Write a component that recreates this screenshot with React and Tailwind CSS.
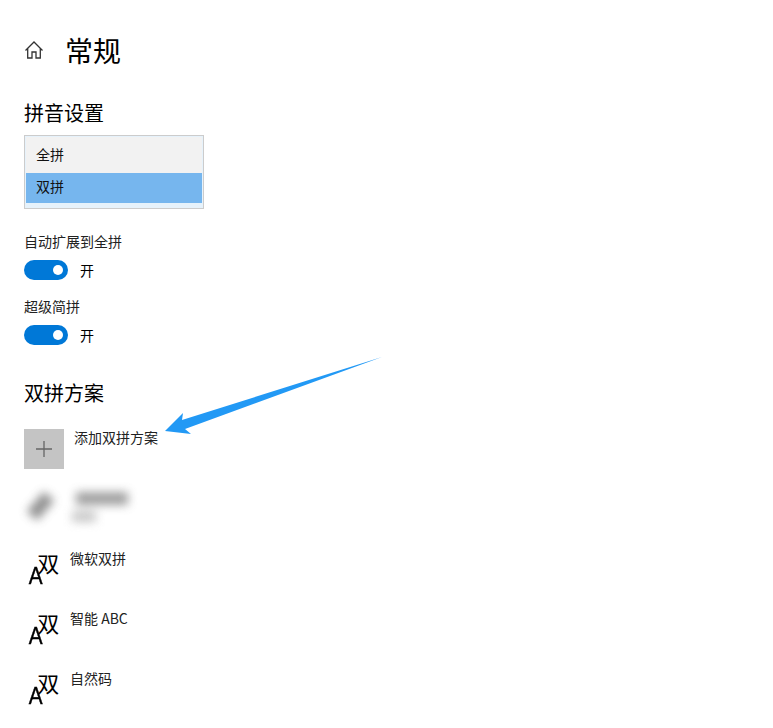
const FONT = "font-['Noto_Sans_CJK_SC','Noto_Sans',sans-serif]";

function Toggle() {
  return (
    <div className="flex items-center h-5 gap-3">
      <div className="w-11 h-5 rounded-full bg-[#0078d7] flex items-center justify-end pr-[5px]">
        <div className="w-[10px] h-[10px] rounded-full bg-white" />
      </div>
      <span className="text-sm leading-5 text-black">开</span>
    </div>
  );
}

function SchemeIcon() {
  return (
    <div className="w-10 h-10 shrink-0 text-black pl-[4px] pt-[3px] flex items-start">
      <span className="text-[23px] leading-none mt-[13px] scale-x-90 [-webkit-text-stroke:0.4px_black] font-['Liberation_Sans',sans-serif]">A</span>
      <span className="text-[22px] leading-none -ml-[6px] -mt-[1px]">双</span>
    </div>
  );
}

function Scheme({ name }) {
  return (
    <div className="flex h-10 mb-5 gap-[6px]">
      <SchemeIcon />
      <span className="text-sm leading-5 text-[#222] -mt-px">{name}</span>
    </div>
  );
}

export default function App() {
  return (
    <div className={`relative w-[773px] h-[728px] overflow-hidden bg-white ${FONT}`}>
      <div className="pl-6 pt-[30px]">
        <div className="flex items-center h-10 gap-[21px]">
          <svg width="20" height="20" viewBox="0 0 20 20" fill="none" stroke="#333" strokeWidth="1.3">
            <path d="M1.5 10.5 10 2l8.500 8.500" />
            <path d="M3.700 8.500V18h4.300v-6h4v6h4.300V8.500" />
          </svg>
          <h1 className="text-[28px] leading-10 text-black font-normal">常规</h1>
        </div>

        <h2 className="mt-[29px] text-[20px] leading-7 font-normal text-black">拼音设置</h2>
        <div className="mt-[8px] w-[180px] h-[74px] border border-[#cccccc] px-px pt-px bg-[#e6f2fb]">
          <div className="h-[36px] bg-[#f2f2f2] px-[10px] text-sm leading-[34px] text-[#111]">全拼</div>
          <div className="h-[30px] bg-[#76b6ee] px-[10px] text-sm leading-[27px] text-[#111]">双拼</div>
        </div>

        <div className="mt-[22px] text-sm leading-5 text-[#222]">自动扩展到全拼</div>
        <div className="mt-[9px]"><Toggle /></div>
        <div className="mt-[16px] text-sm leading-5 text-[#222]">超级简拼</div>
        <div className="mt-[9px]"><Toggle /></div>

        <h2 className="mt-[34px] text-[20px] leading-7 font-normal text-black">双拼方案</h2>

        <div className="mt-[22px] flex gap-[10px] h-10">
          <div className="w-10 h-10 bg-[#c4c4c4] flex items-center justify-center shrink-0">
            <svg width="16" height="16" viewBox="0 0 16 16" stroke="#666" strokeWidth="1.300">
              <path d="M8 0v16M0 8h16" />
            </svg>
          </div>
          <span className="text-sm leading-5 text-[#222] -mt-[2px]">添加双拼方案</span>
        </div>

        <div className="mt-[20px] flex h-10 mb-5 gap-[20px] blur-[5px] opacity-80">
          <svg width="32" height="40" viewBox="0 0 32 40" className="shrink-0">
            <path d="M25 7 L8 27" stroke="#777" strokeWidth="14" fill="none" />
          </svg>
          <div className="flex flex-col gap-[6px] pt-[3px]">
            <div className="w-[52px] h-[13px] bg-[#888]" />
            <div className="w-[24px] h-[11px] -ml-[4px] bg-[#bbb]" />
          </div>
        </div>

        <Scheme name="微软双拼" />
        <Scheme name="智能 ABC" />
        <Scheme name="自然码" />
      </div>

      <svg className="absolute left-0 top-0 pointer-events-none" width="773" height="728" viewBox="0 0 773 728">
        <path d="M382 357 L182 420 L183 413 L165 431 L191 434 L185 429 Z" fill="#2299f5" />
      </svg>
    </div>
  );
}
